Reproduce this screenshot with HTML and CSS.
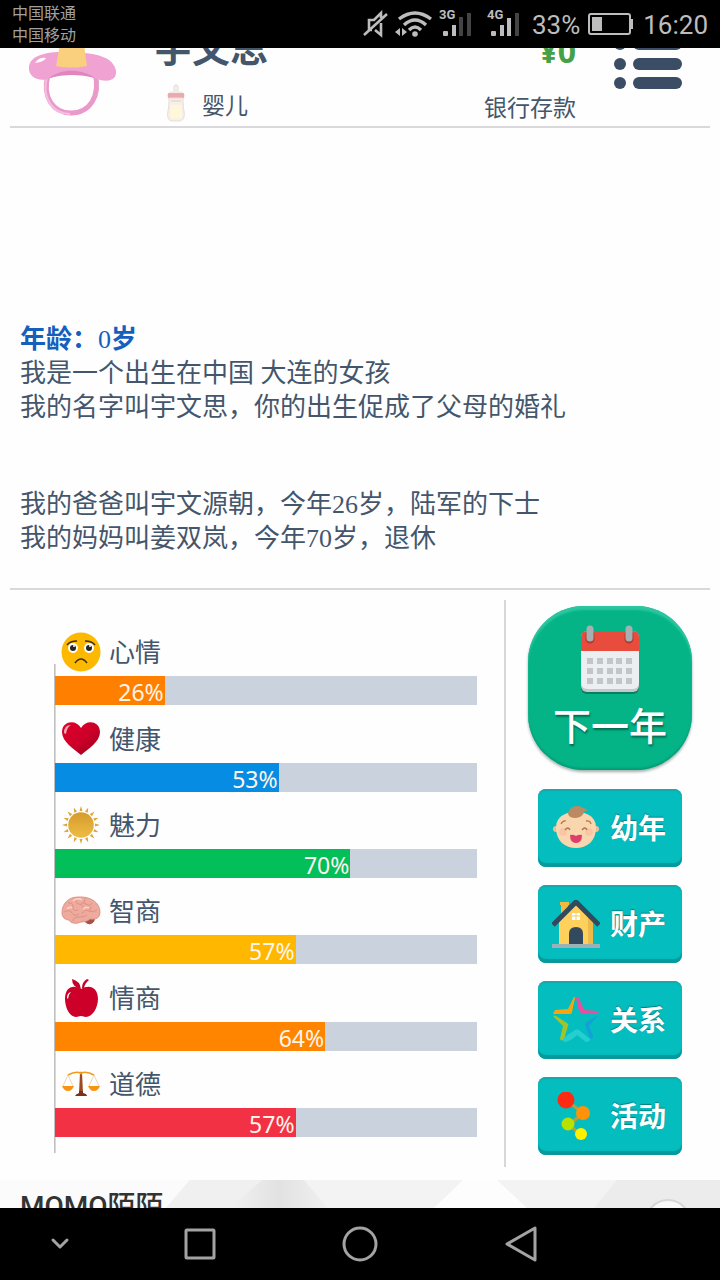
FILE: index.html
```html
<!DOCTYPE html>
<html lang="zh-CN">
<head>
<meta charset="utf-8">
<meta name="viewport" content="width=device-width, initial-scale=1">
<title>人生模拟</title>
<link rel="stylesheet" href="styles.css">
</head>
<body>
<div class="statusbar">
  <div class="carriers"><span>中国联通</span><span>中国移动</span></div>
  <div class="indicators">
    <svg width="25" height="28" viewBox="0 0 25 28" fill="none" stroke="#bdbdbd" stroke-width="2.6"><path d="M1 25 24 4M6 20V10h5l7-7v5M12 20l6 5V13M5 20h4"/></svg>
    <svg class="wide" width="35" height="28" viewBox="0 0 35 28" fill="none" stroke="#bdbdbd" stroke-width="3.4"><path d="M3 9Q19-3 35 9M8 15Q19 5 30 15M13 20Q19 14 25 20"/><circle cx="19" cy="24" r="2.8" fill="#bdbdbd" stroke="none"/><path d="m4 18-5 4 5 4zM6 18l5 4-5 4z" fill="#bdbdbd" stroke="none"/></svg>
    <svg width="40" height="32" viewBox="0 0 40 32"><text class="net" x="0" y="11">3G</text><g fill="#bdbdbd"><rect x="4" y="23" width="5" height="5" rx="1"/><rect x="13" y="17" width="4" height="11"/></g><g fill="#444"><rect x="20" y="9" width="4" height="19"/><rect x="28" y="5" width="4" height="23"/></g></svg>
    <svg width="37" height="32" viewBox="0 0 37 32"><text class="net" x="0" y="11">4G</text><g fill="#bdbdbd"><rect x="4" y="23" width="5" height="5" rx="1"/><rect x="13" y="17" width="4" height="11"/><rect x="20" y="10" width="4" height="18"/></g><rect x="28" y="5" width="4" height="23" fill="#444"/></svg>
    <span>33%</span>
    <svg width="47" height="24" viewBox="0 0 47 24"><rect x="1" y="2" width="41" height="20" rx="2" fill="none" stroke="#bdbdbd" stroke-width="2"/><rect x="4" y="5" width="10" height="14" fill="#bdbdbd"/><rect x="42" y="7" width="3" height="10" fill="#bdbdbd"/></svg>
    <span>16:20</span>
  </div>
</div>

<header class="profile">
  <svg class="avatar" width="90" height="100" viewBox="0 0 90 100">
    <path d="M20 58C14 80 25 96 43 96s30-16 24-40" fill="none" stroke="#e99aca" stroke-width="5"/>
    <path d="M19 60C13 81 25 97 42 97" fill="none" stroke="#f5bfe0" stroke-width="2"/>
    <path d="M1 50C2 38 20 34 44 35s42 5 44 19c1 10-9 12-22 7-16-6-31-5-43 0C11 66 0 60 1 50z" fill="#f0a2d2"/>
    <path d="M21 61c14-10 32-9 46 0-15-4-31-4-46 0z" fill="#de86bd"/>
    <path d="M28 49 32 27V0h24v27l3 22q-16 3-31 0z" fill="#fad07e"/><path d="M7 46q4-6 11-5-2 4-11 5z" fill="#fff"/>
  </svg>
  <div class="identity">
    <h1>宇文思</h1>
    <p class="stage">
      <svg width="24" height="40" viewBox="0 0 24 40"><path d="M10 9V3q2-3 4 0v6z" fill="#f4eee9" stroke="#e4ddd7"/><path d="M4 12q0-4 5-4h6q5 0 5 4H4z" fill="#f3ece6"/><path d="M5 10h14q2 0 1 5H4q-1-5 1-5z" fill="#ecaab0"/><path d="M5 15h14c0 6 0 8 1 13 1 7-1 10-5 10H9c-5 0-6-4-5-10 1-6 1-7 1-13z" fill="#f8f0e8" stroke="#e5ddd7"/><path d="M7 22h10l1 12q-6 3-12 0z" fill="#fff7da"/><path d="M7 18h10" stroke="#f0c6c7"/></svg>
      <span>婴儿</span>
    </p>
  </div>
  <div class="money"><strong>¥0</strong><span>银行存款</span></div>
  <button class="menu" aria-label="菜单">
    <svg width="68" height="52" viewBox="0 0 68 52" fill="#3a4d64"><circle cx="6" cy="6" r="6"/><circle cx="6" cy="26" r="6"/><circle cx="6" cy="45" r="6"/><rect x="19" y="0" width="49" height="12" rx="6"/><rect x="19" y="20" width="49" height="12" rx="6"/><rect x="19" y="39" width="49" height="12" rx="6"/></svg>
  </button>
</header>

<main>
  <section class="story">
    <h2>年龄：<span>0</span>岁</h2>
    <p>我是一个出生在中国 大连的女孩<br>我的名字叫宇文思，你的出生促成了父母的婚礼</p>
    <p>我的爸爸叫宇文源朝，今年26岁，陆军的下士<br>我的妈妈叫姜双岚，今年70岁，退休</p>
  </section>

  <div class="board">
    <section class="chart">
      <div class="stat"><div class="label"><svg width="40" height="40" viewBox="0 0 40 40"><circle cx="20" cy="20" r="19.500" fill="#fdb900"/><circle cx="12" cy="16" r="5" fill="#fff"/><circle cx="28" cy="16" r="5" fill="#fff"/><circle cx="12" cy="16" r="3" fill="#252525"/><circle cx="28" cy="16" r="3" fill="#252525"/><circle cx="13" cy="14" r="1" fill="#fff"/><circle cx="29" cy="14" r="1" fill="#fff"/><path d="M6 13q3-4 10-4M24 9q7 0 10 4M14 31q6-8 12 0" fill="none" stroke="#3b2e12" stroke-width="1.500"/></svg><span>心情</span></div><div class="track"><div class="fill mood" style="width:26%">26%</div></div></div>
      <div class="stat"><div class="label"><svg width="40" height="40" viewBox="0 0 40 40"><defs><linearGradient id="heart" x1="0" y1="0" x2="1" y2="1"><stop stop-color="#e0002c"/><stop offset=".55" stop-color="#cb0029"/><stop offset="1" stop-color="#90001d"/></linearGradient></defs><path d="M20 36C13 30 1 23 1 13 1 2 15 0 20 9 25 0 39 2 39 13c0 10-12 17-19 23z" fill="url(#heart)"/><path d="M3 14q0-8 7-8-4 2-5 9z" fill="#f7a5b2"/></svg><span>健康</span></div><div class="track"><div class="fill health" style="width:53%">53%</div></div></div>
      <div class="stat"><div class="label"><svg width="40" height="40" viewBox="0 0 40 40"><defs><linearGradient id="sun" x1="0" y1="0" x2="0" y2="1"><stop stop-color="#d69b2d"/><stop offset="1" stop-color="#edbd43"/></linearGradient><g id="rays"><path d="m18.500 6 1.500-5 1.500 5zM18.500 34l1.500 5 1.500-5zM6 18.500l-5 1.500 5 1.500zM34 18.500l5 1.500-5 1.500z"/></g></defs><g fill="#dba63c"><use href="#rays"/><use href="#rays" transform="rotate(22.500 20 20)"/><use href="#rays" transform="rotate(45 20 20)"/><use href="#rays" transform="rotate(67.500 20 20)"/></g><circle cx="20" cy="20" r="12.800" fill="url(#sun)"/></svg><span>魅力</span></div><div class="track"><div class="fill charm" style="width:70%">70%</div></div></div>
      <div class="stat"><div class="label"><svg width="40" height="40" viewBox="0 0 40 40"><path d="M23 28q1 6 7 5 4-2 4-6z" fill="#a35248"/><path d="M1 22C1 13 7 6 17 6c13-1 22 6 22 15 0 6-4 8-10 7-4 4-8 2-12 4-5 1-8-1-9-3-4 0-7-3-7-7z" fill="#eeaa9d" stroke="#d4867a" stroke-width=".8"/><path d="M7 12q5-1 5 4t5 3M16 7q-3 5 2 6t4 5M25 7q-4 3 0 6t6-1M3 21q6-3 8 1t7 1M21 23q2-5 7-3t8-1M12 30q0-4 6-4t8-2M31 16q-3 1-2 4M20 12q4-1 6 2" fill="none" stroke="#d68d80" stroke-width=".8"/><path d="M12 10q5-4 9-1M6 18q3-3 5-1M22 18q3-3 6-1" fill="none" stroke="#ffd2c7" stroke-width="1.500"/></svg><span>智商</span></div><div class="track"><div class="fill iq" style="width:57%">57%</div></div></div>
      <div class="stat"><div class="label"><svg width="40" height="40" viewBox="0 0 40 40"><path d="M20 11C12 6 4 9 4 21c0 9 5 18 11 18 2 0 3-1 5-1s3 1 5 1c6 0 12-9 12-18 0-12-9-15-17-10z" fill="#cc0028"/><path d="M20 11Q19 3 11 1q0 8 9 10zM21 10q0-6 5-9l2 1q-4 3-5 8z" fill="#c4002b"/><path d="M6 20q0-5 4-6-3 3-3 7z" fill="#fff"/></svg><span>情商</span></div><div class="track"><div class="fill eq" style="width:64%">64%</div></div></div>
      <div class="stat"><div class="label"><svg width="40" height="40" viewBox="0 0 40 40"><path d="M7 11q7-4 13-2 6-2 13 2" fill="none" stroke="#ef9d1b" stroke-width="1.500"/><path d="m7 11-5 11M7 11l5 11M33 11l-5 11M33 11l5 11" stroke="#e0b98a" stroke-width=".6"/><path d="M1 22h12q-2 5-6 5t-6-5zM27 22h12q-2 5-6 5t-6-5z" fill="#f79412"/><path d="m19 9-1 20h4L21 9z" fill="#9b4a22"/><circle cx="20" cy="9" r="1.500" fill="#ed9e22"/><path d="M14 32q1-2 4-3v-2h4v2q4 1 4 3z" fill="#7a321b"/></svg><span>道德</span></div><div class="track"><div class="fill moral" style="width:57%">57%</div></div></div>
    </section>

    <nav class="actions">
      <button class="next">
        <svg width="60" height="70" viewBox="0 0 60 70"><rect x="1" y="10" width="58" height="60" rx="6" fill="#087e60"/><rect x="1" y="8" width="58" height="60" rx="6" fill="#c4c8c9"/><rect x="1" y="7" width="58" height="58" rx="6" fill="#ebeff2"/><path d="M1 27V13q0-6 6-6h46q6 0 6 6v14z" fill="#e74c3c"/><path d="M10 11v4M49 11v4" stroke="#b43a30" stroke-width="9" stroke-linecap="round"/><path d="M10 5v9M49 5v9" stroke="#a6afb1" stroke-width="7" stroke-linecap="round"/><g fill="#c3c6c8"><path id="days" d="M7 34h6v6H7zM17 34h6v6h-6zM27 34h6v6h-6zM36 34h6v6h-6zM46 34h6v6h-6z"/><use href="#days" y="10"/><use href="#days" y="20"/></g></svg>
        <span>下一年</span>
      </button>
      <button class="action"><svg width="48" height="48" viewBox="0 0 48 48"><circle cx="4" cy="25" r="3" fill="#eebd98"/><circle cx="44" cy="25" r="3" fill="#eebd98"/><path d="M4 24C4 12 14 8 24 8s20 4 20 16c0 13-9 20-20 20S4 37 4 24z" fill="#f9d6ae"/><path d="M16 9q2-8 11-7l9 4-4 2q-1 5-8 6-8 0-8-5z" fill="#bb8a62"/><circle cx="11" cy="28" r="4" fill="#f8c6a5"/><circle cx="37" cy="28" r="4" fill="#f8c6a5"/><path d="M9 20q2-4 5-3M34 17q4-1 5 3M13 26q3-4 5 0M30 26q3-4 5 0" fill="none" stroke="#ae764d" stroke-width="1.300"/><path d="M18 31q3-1 6 1 3-2 6-1 0 8-6 8t-6-8z" fill="#df3d6c"/></svg><span>幼年</span></button>
      <button class="action"><svg width="48" height="48" viewBox="0 0 48 48"><path d="M8 2h9v3h-1v12H9V5H8z" fill="#f0b941"/><path d="M7 21 24 4l17 17v24H7z" fill="#ffd15c"/><path d="M34 14 41 21v24h-5V16z" fill="#edb947"/><path d="M1 25 24 2l23 23" fill="none" stroke="#334a5e" stroke-width="5"/><path d="M17 45V34q0-7 7-7t7 7v11z" fill="#334a5e"/><path d="M20 13h8v7h-8z" fill="#fff"/><path d="M24 13v7M20 16h8" stroke="#f0cb70"/><path d="M0 44h48v4H0z" fill="#9bb1b7"/></svg><span>财产</span></button>
      <button class="action"><svg width="48" height="48" viewBox="0 0 48 48"><path d="M22 1q1-1 1 1l-3 14q0 2-2 2H1l2-4 13-1z" fill="#f7a70b"/><path d="M24 2q2-2 3 0l5 12 13 1q3 1 0 3l-15-1q-2 0-3-2z" fill="#ec4da0"/><path d="M1 20q1-1 3 0l11 7q2 1 1 3l-4 13q-2 3-4 0l3-13z" fill="#a0c42a"/><path d="m46 19-9 11 4 10q0 3-3 2l-5-13q0-2 2-3z" fill="#159fd9"/><path d="M11 43q1-2 3-3l9-6q2-1 4 0l11 9q0 3-4 3l-9-7q-7 7-13 7z" fill="#25cfd1"/></svg><span>关系</span></button>
      <button class="action"><svg width="48" height="48" viewBox="0 0 48 48"><path d="m14 8 17 13-14 12 12 10" fill="none" stroke="#b4a03a" stroke-width="3"/><circle cx="14" cy="8" r="8.500" fill="#ff2a12"/><circle cx="31" cy="21" r="7" fill="#ff9208"/><circle cx="16" cy="32" r="6.500" fill="#b8e000"/><circle cx="29" cy="42" r="6" fill="#fff000"/></svg><span>活动</span></button>
    </nav>
  </div>
</main>

<a class="ad" href="#">
  <svg class="facets" viewBox="0 0 720 28" preserveAspectRatio="none"><defs><linearGradient id="shade"><stop stop-color="#f1f1f1"/><stop offset=".5" stop-color="#e2e2e2"/><stop offset="1" stop-color="#f0f0f0"/></linearGradient></defs><path d="M0 0h190l-24 28H0z" fill="#fbfbfb"/><path d="M190 0h72l-32 28h-64z" fill="#f0f0f0"/><path d="M262 0h42l24 28H230z" fill="url(#shade)"/><path d="M463 0h34l30 28h-93z" fill="#fdfdfd"/><path d="M617 0h103v28H594z" fill="#ececec"/><circle cx="668" cy="42" r="22" fill="#f9f9f9" stroke="#d7d7d7" stroke-width="2"/></svg>
  <span>MOMO陌陌</span>
</a>

<footer class="navbar">
  <button aria-label="收起"><svg width="20" height="14" viewBox="0 0 20 14"><path d="m3 3 7 7 7-7"/></svg></button>
  <button aria-label="最近任务"><svg width="32" height="32" viewBox="0 0 32 32"><rect x="2" y="2" width="28" height="28" rx="1"/></svg></button>
  <button aria-label="主页"><svg width="36" height="36" viewBox="0 0 36 36"><circle cx="18" cy="18" r="16"/></svg></button>
  <button aria-label="返回"><svg width="36" height="40" viewBox="0 0 36 40"><path d="M33 4v32L5 20z"/></svg></button>
</footer>
</body>
</html>
```

FILE: styles.css
```css
* { box-sizing: border-box; margin: 0; padding: 0; }
svg { display: block; flex: none; }
button { border: 0; background: none; font: inherit; color: inherit; cursor: pointer; }

body {
  min-height: 100vh;
  display: flex;
  flex-direction: column;
  background: #fefefe;
  color: #44566c;
  font-family: "Noto Sans CJK SC", sans-serif;
}

/* system status bar */
.statusbar {
  height: 48px;
  display: flex;
  justify-content: space-between;
  align-items: center;
  padding: 0 12px;
  background: #000;
  color: #bdbdbd;
}
.carriers { display: flex; flex-direction: column; font-size: 16px; line-height: 22px; color: #a0a0a0; padding-bottom: 3px; }
.indicators { display: flex; align-items: center; gap: 8px; font: 26px/32px Roboto, sans-serif; }
.indicators span { padding-top: 2px; }
.wide { overflow: visible; }
.net { font: bold 13px Roboto, sans-serif; fill: #bdbdbd; }

/* profile */
.profile {
  height: 80px;
  margin: 0 10px;
  padding-left: 18px;
  display: flex;
  align-items: flex-end;
  overflow: hidden;
  border-bottom: 2px solid #d9d9dc;
}
.avatar { margin-bottom: 9px; }
.identity { margin-left: 36px; }
.identity h1 { font-size: 38px; line-height: 44px; }
.stage { display: flex; align-items: center; gap: 14px; padding: 15px 0 3px 10px; font-size: 23px; line-height: 36px; }
.stage span { padding-top: 2px; }
.money { margin-left: auto; display: flex; flex-direction: column; align-items: flex-end; font-size: 23px; line-height: 36px; }
.money strong { font: bold 32px/44px "Noto Sans", sans-serif; color: #46a046; padding-bottom: 15px; }
.money span { padding-bottom: 2px; }
.menu { margin: 0 28px 36px 38px; }

/* story log */
main { flex: 1; display: flex; flex-direction: column; }
.story {
  flex: 1;
  margin: 0 10px;
  padding: 0 10px 32px;
  display: flex;
  flex-direction: column;
  justify-content: flex-end;
  border-bottom: 2px solid #d9d9dc;
  font: 26px/34px "Liberation Serif", "Kaiti SC", KaiTi, "Noto Sans CJK SC", serif;
}
.story h2 { font-size: 26px; line-height: 34px; color: #1560bd; }
.story h2 span { font-weight: 400; }
.story p + p { margin-top: 63px; }

/* stats and actions */
.board { display: flex; align-items: stretch; padding: 10px 10px 13px; }
.chart {
  flex: 1;
  margin: 19px 27px 14px 44px;
  padding: 0 0 16px 1px;
  display: grid;
  grid-auto-rows: 1fr;
  background: linear-gradient(90deg, #b4b4b4, #e4e4e4) no-repeat left bottom / 2px calc(100% - 45px);
}
.stat { display: flex; flex-direction: column; justify-content: flex-end; gap: 4px; }
.label { display: flex; align-items: center; gap: 8px; height: 40px; padding-left: 6px; font-size: 26px; line-height: 38px; }
.label span { padding-bottom: 2px; }
.track { height: 29px; background: #c9d2dd; }
.fill {
  height: 100%;
  padding: 2px 1px 0 0;
  text-align: right;
  font: 23px/29px "Noto Sans", sans-serif;
  color: #fff4ea;
}
.mood { background: #ff8000; }
.health { background: #078ce3; }
.charm { background: #03bf5a; }
.iq { background: #ffb700; }
.eq { background: #ff8400; }
.moral { background: #f23144; }

.actions {
  width: 206px;
  display: flex;
  flex-direction: column;
  align-items: center;
  gap: 18px;
  padding: 6px 0 12px 4px;
  border-left: 2px solid #d7d7da;
  color: #fff;
}
.next {
  width: 164px;
  height: 164px;
  margin-bottom: 1px;
  display: flex;
  flex-direction: column;
  align-items: center;
  gap: 5px;
  padding-top: 18px;
  border-radius: 56px;
  background: #04b487;
  box-shadow: inset 0 4px 2px #2cc69f, inset 0 -2px 2px #049d78, 0 2px 3px #9fb0ab;
  font-size: 38px;
  font-weight: 500;
  line-height: 50px;
  text-shadow: 1px 2px 2px #046b50;
}
.action {
  width: 144px;
  height: 78px;
  display: flex;
  align-items: center;
  gap: 10px;
  padding: 0 14px;
  border-radius: 8px;
  background: #04bdbf;
  box-shadow: inset 0 2px 1px #18a9ab, inset 0 -4px 1px #07999b;
  font-size: 28px;
  font-weight: 700;
  line-height: 40px;
  text-shadow: 0 -1px 1px #047d80;
}
.action span { padding-bottom: 2px; }

/* sponsor strip */
.ad {
  position: relative;
  height: 28px;
  overflow: hidden;
  background: #f3f3f3;
  color: #333;
  font: 500 28px/40px Roboto, "Noto Sans CJK SC", sans-serif;
  text-decoration: none;
}
.facets { position: absolute; inset: 0; width: 100%; height: 100%; }
.ad span { position: relative; display: block; padding: 7px 20px 0; }

/* system navigation */
.navbar { height: 72px; display: grid; grid-template-columns: 3fr 4fr 4fr 4fr 3fr; background: #000; }
.navbar button { display: grid; place-items: center; }
.navbar svg { fill: none; stroke: #a3a3a3; stroke-width: 3; stroke-linejoin: round; stroke-linecap: round; }
```
